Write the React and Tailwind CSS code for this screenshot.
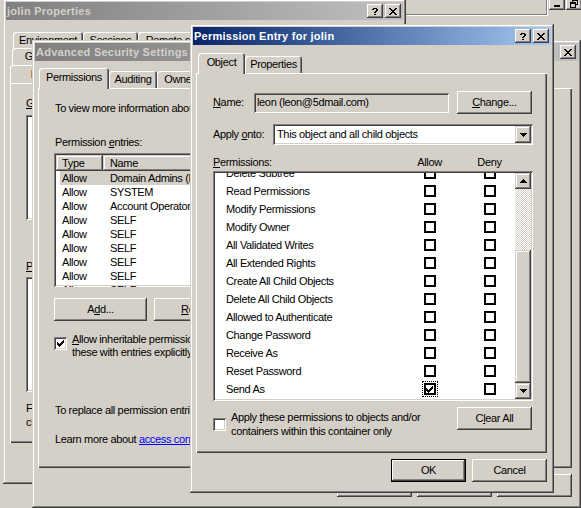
import React from 'react';

const FONT = "font-['Liberation_Sans',Arial,sans-serif]";
const RAISED = 'shadow-[inset_-1px_-1px_0_#404040,inset_1px_1px_0_#fff,inset_-2px_-2px_0_#808080,inset_2px_2px_0_#d4d0c8]';
const FRAME = 'shadow-[inset_-1px_-1px_0_#404040,inset_1px_1px_0_#d4d0c8,inset_-2px_-2px_0_#808080,inset_2px_2px_0_#fff]';
const DEFAULT = 'shadow-[inset_0_0_0_1px_#000,inset_-2px_-2px_0_#404040,inset_2px_2px_0_#fff,inset_-3px_-3px_0_#808080]';
const SUNKEN = 'shadow-[inset_1px_1px_0_#808080,inset_-1px_-1px_0_#fff,inset_2px_2px_0_#404040,inset_-2px_-2px_0_#d4d0c8]';
const PANEL = 'shadow-[inset_1px_1px_0_#fff,inset_-1px_-1px_0_#404040,inset_-2px_-2px_0_#808080]';
const TAB = 'shadow-[inset_1px_1px_0_#fff,inset_-1px_0_0_#404040,inset_-2px_0_0_#808080]';
const DITHER = '[background-image:repeating-conic-gradient(#d4d0c8_0_25%,#fff_0_50%)] [background-size:2px_2px]';

// pixel glyphs
const CLOSE = 'M0 0h2v1H0zM6 0h2v1H6zM1 1h2v1H1zM5 1h2v1H5zM2 2h4v1H2zM3 3h2v1H3zM2 4h4v1H2zM1 5h2v1H1zM5 5h2v1H5zM0 6h2v1H0zM6 6h2v1H6z';
const HELP = 'M1 0h4v1H1zM0 1h2v1H0zM4 1h2v1H4zM4 2h2v1H4zM3 3h2v1H3zM2 4h2v1H2zM2 6h2v1H2z';
const CHECK = 'M6 0h1v1H6zM5 1h2v1H5zM0 2h1v1H0zM4 2h3v1H4zM0 3h2v1H0zM3 3h3v1H3zM0 4h5v1H0zM1 5h3v1H1zM2 6h1v1H2z';
const DOWN = 'M0 0h7v1H0zM1 1h5v1H1zM2 2h3v1H2zM3 3h1v1H3z';
const UP = 'M3 0h1v1H3zM2 1h3v1H2zM1 2h5v1H1zM0 3h7v1H0z';
const MIN = 'M0 5h6v2H0z';
const RESTORE = 'M2 0h6v2H2zM2 2h1v1H2zM7 2h1v4H7zM6 5h1v1H6zM0 3h6v2H0zM0 5h1v4H0zM5 5h1v4H5zM0 8h6v1H0z';

function Px({ w, h, d }) {
  return (
    <svg width={w} height={h} viewBox={`0 0 ${w} ${h}`} shapeRendering="crispEdges">
      <path d={d} fill="currentColor" />
    </svg>
  );
}

function CapBtn({ children }) {
  return (
    <div className={`flex h-[14px] w-4 items-center justify-center bg-[#d4d0c8] text-black ${RAISED}`}>
      {children}
    </div>
  );
}

function Window({ className, title, active, help, children }) {
  return (
    <div className={`absolute isolate flex flex-col bg-[#d4d0c8] p-[3px] ${FRAME} ${className}`}>
      <div
        className={`flex h-[18px] shrink-0 items-center bg-linear-to-r pl-px pr-[2px] ${
          active ? 'from-[#0a246a] to-[#a6caf0] text-white' : 'from-[#808080] to-[#c0c0c0] text-[#d4d0c8]'
        }`}
      >
        <span className="flex-1 whitespace-nowrap text-[11px] font-bold tracking-[0.25px]">{title}</span>
        <div className="flex gap-[2px]">
          {help && (
            <CapBtn>
              <Px w={6} h={7} d={HELP} />
            </CapBtn>
          )}
          <CapBtn>
            <Px w={8} h={7} d={CLOSE} />
          </CapBtn>
        </div>
      </div>
      {children}
    </div>
  );
}

function Tab({ children, selected, className = '', h = 'h-[17px]' }) {
  if (selected) {
    return (
      <div
        className={`relative z-10 -mb-px flex h-[21px] shrink-0 items-center justify-center whitespace-nowrap rounded-t-[3px] bg-[#d4d0c8] pb-[2px] ${TAB} ${className}`}
      >
        {children}
      </div>
    );
  }
  return (
    <div
      className={`flex shrink-0 items-center justify-center whitespace-nowrap rounded-t-[3px] bg-[#d4d0c8] ${TAB} ${h} ${className}`}
    >
      {children}
    </div>
  );
}

function Button({ children, isDefault, className = '' }) {
  return (
    <div
      className={`flex h-[23px] w-[75px] shrink-0 items-center justify-center whitespace-nowrap bg-[#d4d0c8] ${
        isDefault ? DEFAULT : RAISED
      } ${className}`}
    >
      {children}
    </div>
  );
}

function CheckBox({ checked }) {
  return (
    <div className={`flex h-[13px] w-[13px] shrink-0 items-center justify-center bg-white ${SUNKEN}`}>
      {checked && <Px w={7} h={7} d={CHECK} />}
    </div>
  );
}

function ListCheck({ checked, focus }) {
  return (
    <div
      className={`flex h-[12px] w-[12px] items-center justify-center border-2 border-black bg-white ${
        focus ? 'outline-1 outline-offset-1 outline-dotted outline-black' : ''
      }`}
    >
      {checked && <Px w={7} h={7} d={CHECK} />}
    </div>
  );
}

function ArrowBtn({ d }) {
  return (
    <div className={`flex h-4 w-4 shrink-0 items-center justify-center bg-[#d4d0c8] ${FRAME}`}>
      <Px w={7} h={4} d={d} />
    </div>
  );
}

const perms = [
  'Delete Subtree',
  'Read Permissions',
  'Modify Permissions',
  'Modify Owner',
  'All Validated Writes',
  'All Extended Rights',
  'Create All Child Objects',
  'Delete All Child Objects',
  'Allowed to Authenticate',
  'Change Password',
  'Receive As',
  'Reset Password',
  'Send As',
];

const entries = [
  ['Domain Admins (DOMAIN\\Domain Admins)', 'Full Control'],
  ['SYSTEM', 'Full Control'],
  ['Account Operators (DOMAIN\\Account Operators)', 'Full Control'],
  ['SELF', 'Special'],
  ['SELF', 'Special'],
  ['SELF', 'Special'],
  ['SELF', 'Special'],
  ['SELF', 'Special'],
  ['SELF', 'Special'],
];

function JolinWindow() {
  return (
    <Window className="left-[3px] top-[-1px] h-[485px] w-[403px]" title="jolin Properties" help>
      <div className="ml-[7px] mt-[12px] flex">
        <Tab h="h-[16px]" className="w-[70px]">Environment</Tab>
        <Tab h="h-[16px]" className="w-[55px]">Sessions</Tab>
        <Tab h="h-[16px]" className="w-[85px]">Remote control</Tab>
        <Tab h="h-[16px]" className="w-[130px]">Terminal Services Profile</Tab>
        <Tab h="h-[16px]" className="w-[50px]">COM+</Tab>
      </div>
      <div className="ml-[6px] flex">
        <Tab className="w-[62px]">General</Tab>
        <Tab className="w-[60px]">Address</Tab>
        <Tab className="w-[60px]">Account</Tab>
        <Tab className="w-[55px]">Profile</Tab>
        <Tab className="w-[70px]">Telephones</Tab>
        <Tab className="w-[80px]">Organization</Tab>
      </div>
      <div className="ml-[4px] flex h-[18px] items-end">
        <Tab h="h-[18px]" className="w-[140px]">Published Certificates</Tab>
        <Tab h="h-[18px]" className="w-[70px]">Member Of</Tab>
        <Tab h="h-[18px]" className="w-[50px]">Dial-in</Tab>
        <Tab h="h-[18px]" className="w-[55px]">Object</Tab>
        <Tab selected className="w-[60px]">Security</Tab>
      </div>
      <div className={`ml-[4px] flex h-[360px] w-[388px] shrink-0 flex-col pl-[16px] ${PANEL}`}>
        <div className="mt-[14px] h-[13px] whitespace-nowrap">
          <span className="underline">G</span>roup or user names:
        </div>
        <div className={`mt-[5px] h-[105px] w-[356px] bg-white ${SUNKEN}`} />
        <div className="mt-[6px] flex h-[23px] justify-end gap-[6px] pr-[16px]">
          <Button>Add...</Button>
          <Button>Remove</Button>
        </div>
        <div className="mt-[11px] h-[13px] whitespace-nowrap">
          <span className="underline">P</span>ermissions for jolin
        </div>
        <div className={`mt-[4px] h-[115px] w-[356px] bg-white ${SUNKEN}`} />
        <div className="mt-[9px] whitespace-nowrap leading-[14px]">
          <div>For special permissions or for advanced settings,</div>
          <div>click Advanced.</div>
        </div>
      </div>
    </Window>
  );
}

function AdvancedWindow() {
  return (
    <Window className="left-[32px] top-[40px] h-[468px] w-[549px]" title="Advanced Security Settings">
      <div className="ml-[4px] mt-[7px] flex h-[20px] items-end">
        <Tab selected className="w-[70px]">Permissions</Tab>
        <Tab className="w-[48px]">Auditing</Tab>
        <Tab className="w-[45px]">Owner</Tab>
        <Tab className="w-[115px]">Effective Permissions</Tab>
      </div>
      <div className={`ml-[3px] flex h-[380px] w-[534px] shrink-0 flex-col pl-[16px] ${PANEL}`}>
        <div className="ml-px mt-[14px] h-[13px] whitespace-nowrap">
          To view more information about special permissions, select a permission entry, and then click Edit.
        </div>
        <div className="ml-px mt-[21px] h-[13px] whitespace-nowrap">
          Permission <span className="underline">e</span>ntries:
        </div>
        <div className={`mt-[4px] flex h-[134px] w-[500px] shrink-0 flex-col overflow-hidden bg-white p-[2px] ${SUNKEN}`}>
          <div className="flex h-[16px] shrink-0">
            <div className={`flex w-[47px] items-center bg-[#d4d0c8] pl-[6px] ${FRAME}`}>Type</div>
            <div className={`flex w-[240px] items-center bg-[#d4d0c8] pl-[7px] ${FRAME}`}>Name</div>
            <div className={`flex w-[90px] items-center bg-[#d4d0c8] pl-[7px] ${FRAME}`}>Permission</div>
            <div className={`flex flex-1 items-center bg-[#d4d0c8] pl-[7px] ${FRAME}`}>Inherited From</div>
          </div>
          {entries.map(([name, perm], i) => (
            <div
              key={i}
              className={`ml-[4px] flex h-[14px] shrink-0 items-center whitespace-nowrap ${i === 0 ? 'bg-[#d4d0c8]' : ''}`}
            >
              <span className="w-[43px] pl-[2px]">Allow</span>
              <span className="w-[240px] pl-[7px]">{name}</span>
              <span className="w-[90px] pl-[7px]">{perm}</span>
              <span className="pl-[7px]">&lt;not inherited&gt;</span>
            </div>
          ))}
        </div>
        <div className="mt-[11px] flex gap-[7px]">
          <Button className="w-[93px]">
            A<span className="underline">d</span>d...
          </Button>
          <Button className="w-[93px]">
            <span className="underline">R</span>emove
          </Button>
          <Button className="w-[93px]">
            <span className="underline">E</span>dit...
          </Button>
        </div>
        <div className="mt-[12px] flex items-start gap-[5px]">
          <div className="mt-[4px]">
            <CheckBox checked />
          </div>
          <div className="whitespace-nowrap leading-[13px]">
            <div>
              <span className="underline">A</span>llow inheritable permissions from the parent to propagate to this object and all child objects. Include
            </div>
            <div>these with entries explicitly defined here.</div>
          </div>
        </div>
        <div className="ml-px mt-[45px] h-[13px] whitespace-nowrap">
          To replace all permission entries on all child objects with entries shown here that apply to child objects
        </div>
        <div className="ml-px mt-[16px] h-[13px] whitespace-nowrap">
          Learn more about <span className="text-[#0000ff] underline">access control</span>.
        </div>
      </div>
      <div className="ml-auto mr-[6px] mt-[6px] flex gap-[5px]">
        <Button>OK</Button>
        <Button>Cancel</Button>
        <Button>Apply</Button>
      </div>
    </Window>
  );
}

function EntryWindow() {
  return (
    <Window className="left-[190px] top-[24px] h-[469px] w-[364px]" title="Permission Entry for jolin" active help>
      <div className="ml-[5px] mt-[8px] flex h-[20px] items-end">
        <Tab selected className="w-[47px]">Object</Tab>
        <Tab className="w-[57px]">Properties</Tab>
      </div>
      <div className={`ml-[3px] mr-[4px] flex h-[380px] shrink-0 flex-col pl-[17px] pr-[14px] ${PANEL}`}>
        {/* name */}
        <div className="mt-[18px] flex h-[23px] items-center">
          <span className="w-[41px]">
            <span className="underline">N</span>ame:
          </span>
          <div className={`flex h-[20px] w-[195px] items-center bg-[#d4d0c8] pl-[3px] whitespace-nowrap ${SUNKEN}`}>
            leon (leon@5dmail.com)
          </div>
          <Button className="ml-auto mr-px">
            <span className="underline">C</span>hange...
          </Button>
        </div>
        {/* apply onto */}
        <div className="mt-[10px] flex h-[21px] items-center">
          <span className="w-[60px] whitespace-nowrap">
            Apply <span className="underline">o</span>nto:
          </span>
          <div className={`flex h-[21px] flex-1 items-center bg-white pl-[4px] pr-[2px] ${SUNKEN}`}>
            <span className="flex-1 whitespace-nowrap">This object and all child objects</span>
            <div className={`flex h-[17px] w-[16px] items-center justify-center bg-[#d4d0c8] ${FRAME}`}>
              <Px w={7} h={4} d={DOWN} />
            </div>
          </div>
        </div>
        {/* header */}
        <div className="mt-[10px] flex h-[14px] items-center whitespace-nowrap">
          <span className="w-[196px]">
            <span className="underline">P</span>ermissions:
          </span>
          <span className="flex w-[41px] justify-center">Allow</span>
          <span className="w-[19px]" />
          <span className="flex w-[41px] justify-center">Deny</span>
        </div>
        {/* list */}
        <div className={`mt-[2px] flex h-[230px] shrink-0 bg-white p-[2px] ${SUNKEN}`}>
          <div className="flex-1 overflow-hidden">
            <div className="-mt-[9px]">
              {perms.map((p, i) => {
                const last = i === perms.length - 1;
                return (
                  <div key={p} className="flex h-[18px] items-center whitespace-nowrap">
                    <span className="w-[194px] pl-[11px]">{p}</span>
                    <div className="flex w-[41px] justify-center">
                      <ListCheck checked={last} focus={last} />
                    </div>
                    <span className="w-[19px]" />
                    <div className="flex w-[41px] justify-center">
                      <ListCheck />
                    </div>
                  </div>
                );
              })}
            </div>
          </div>
          <div className="flex w-4 flex-col">
            <ArrowBtn d={UP} />
            <div className={`h-[61px] shrink-0 ${DITHER}`} />
            <div className={`h-[133px] shrink-0 bg-[#d4d0c8] ${FRAME}`} />
            <ArrowBtn d={DOWN} />
          </div>
        </div>
        {/* apply checkbox + clear all */}
        <div className="mt-[6px] flex items-start">
          <div className="mt-[3px] flex items-center gap-[5px]">
            <CheckBox />
            <div className="whitespace-nowrap leading-[14px]">
              <div>
                Apply <span className="underline">t</span>hese permissions to objects and/or
              </div>
              <div>containers within this container only</div>
            </div>
          </div>
          <Button className="ml-auto mr-px">
            C<span className="underline">l</span>ear All
          </Button>
        </div>
      </div>
      <div className="ml-auto mr-[4px] mt-[6px] flex gap-[6px]">
        <Button isDefault>OK</Button>
        <Button>Cancel</Button>
      </div>
    </Window>
  );
}

export default function App() {
  return (
    <div
      className={`relative h-[508px] w-[581px] overflow-hidden bg-[#d4d0c8] text-[11px] leading-[13px] tracking-[-0.35px] text-black ${FONT}`}
    >
      {/* console window behind the dialogs */}
      <div className="absolute left-[406px] top-[-10px] h-[25px] w-[141px] border-b border-r border-[#808080] shadow-[1px_1px_0_#fff]" />
      <div className="absolute left-[549px] top-[-4px] flex gap-px">
        <CapBtn>
          <Px w={6} h={7} d={MIN} />
        </CapBtn>
        <CapBtn>
          <Px w={8} h={9} d={RESTORE} />
        </CapBtn>
      </div>
      <JolinWindow />
      <AdvancedWindow />
      <EntryWindow />
    </div>
  );
}
